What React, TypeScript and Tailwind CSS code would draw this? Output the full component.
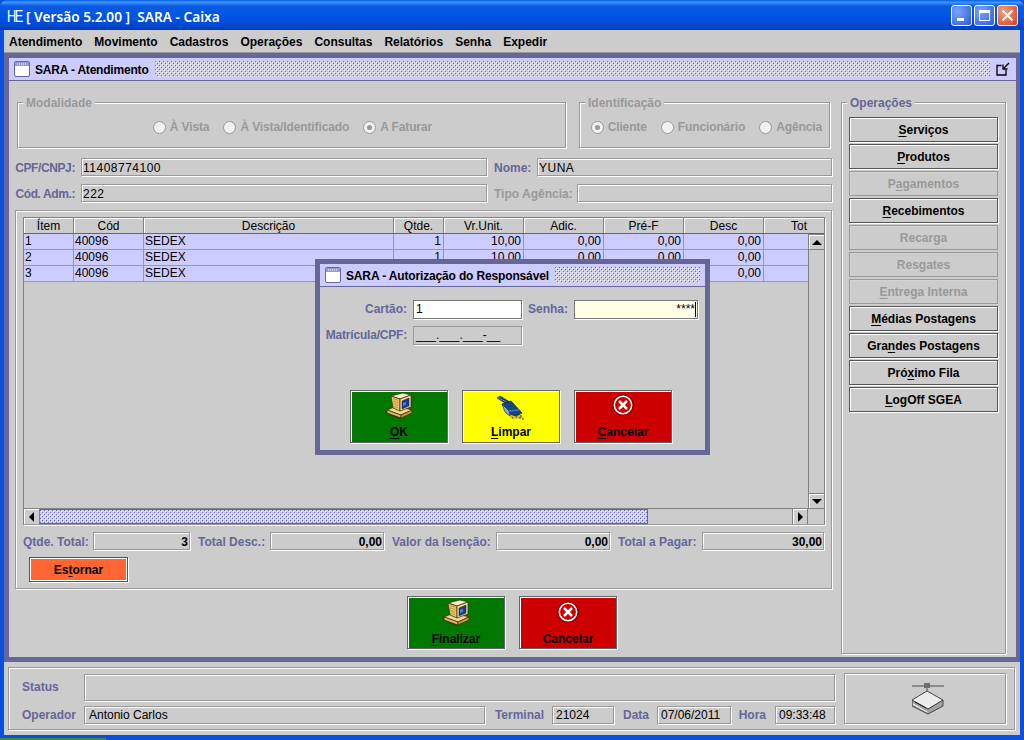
import React from "react";

const etched = "border border-[#999999] shadow-[inset_1px_1px_0_#ffffff,1px_1px_0_#ffffff]";
const dither =
  "bg-[conic-gradient(from_270deg_at_1px_1px,#666699_25%,transparent_0),conic-gradient(from_270deg_at_1px_1px,#666699_25%,transparent_0),conic-gradient(from_270deg_at_1px_1px,#ffffff_25%,transparent_0),conic-gradient(from_270deg_at_1px_1px,#ffffff_25%,transparent_0)] bg-[length:4px_4px] bg-[position:0_0,2px_2px,1px_1px,3px_3px]";

function FrameIcon() {
  return (
    <svg width="16" height="16" viewBox="0 0 16 16" className="shrink-0">
      <rect x="0.5" y="0.5" width="15" height="15" rx="1.5" fill="#ffffff" stroke="#666699" />
      <rect x="1" y="1" width="14" height="4" fill="#9999cc" />
      <path d="M3 3h1M5 3h1M7 3h1M9 3h1M11 3h1" stroke="#ffffff" />
    </svg>
  );
}

function Computer() {
  return (
    <svg width="28" height="27" viewBox="0 0 28 27" className="block">
      <path d="M0 21L14 27h3L2 19z" fill="#1f3a10" opacity="0.8" />
      <path d="M2 18l10-4 15 4-11 5z" fill="#f0d890" stroke="#3a2a0a" strokeWidth="0.7" />
      <path d="M2 18l14 5v3L2 21z" fill="#e0b860" stroke="#3a2a0a" strokeWidth="0.7" />
      <path d="M16 23l11-5v3l-11 5z" fill="#c89838" stroke="#3a2a0a" strokeWidth="0.7" />
      <path d="M6 4L18 1l8 2-11 4z" fill="#fff0c0" stroke="#3a2a0a" strokeWidth="0.7" />
      <path d="M6 4l9 3v12l-7-3z" fill="#e8c060" stroke="#3a2a0a" strokeWidth="0.7" />
      <path d="M15 7l11-4v12l-11 4z" fill="#f4dc9c" stroke="#3a2a0a" strokeWidth="0.7" />
      <path d="M17 9l7-3v8l-7 3z" fill="#1a3a9a" stroke="#3a2a0a" strokeWidth="0.5" />
      <path d="M18 11l3-1.300v3L18 14z" fill="#4a80d8" />
      <path d="M8 6.500l5 1.700M8 9l5 1.700M8 11.500l5 1.700M8 14l5 1.700" stroke="#b08c40" strokeWidth="0.7" />
    </svg>
  );
}

function Broom() {
  return (
    <svg width="30" height="24" viewBox="0 0 30 24" className="block">
      <path d="M7 14l9 9 12-1-8-6z" fill="#b8a030" opacity="0.7" />
      <path d="M1 2l3-2 10 6-2 3z" fill="#14407c" stroke="#0c2a50" strokeWidth="0.6" />
      <path d="M2 1.500l9 5" stroke="#6a9ad0" strokeWidth="0.8" />
      <path d="M6 8l9-3 11 12-6 3-9-3z" fill="#14477f" stroke="#0c2a50" strokeWidth="0.8" />
      <path d="M6 8l7 7 1 5-5-4z" fill="#8ab0d8" stroke="#0c2a50" strokeWidth="0.6" />
      <path d="M13 15l10-1" stroke="#3f78b8" strokeWidth="1.500" />
      <path d="M16 22h1M20 21h1M23 22h2M26 23h2M24 20h2" stroke="#404040" />
    </svg>
  );
}

function CancelIcon() {
  return (
    <svg width="22" height="22" viewBox="0 0 22 22" className="block">
      <circle cx="11" cy="11" r="11" fill="#8f0000" />
      <circle cx="11" cy="11" r="8.700" fill="#cc0000" stroke="#ffffff" strokeWidth="1.500" />
      <path d="M7 7l8 8M15 7l-8 8" stroke="#ffffff" strokeWidth="2.500" />
    </svg>
  );
}

function NetworkIcon() {
  return (
    <svg width="33" height="32" viewBox="0 0 33 32" className="block">
      <path d="M0 3h32" stroke="#8c8c8c" strokeWidth="2" />
      <rect x="12" y="0" width="6" height="5" fill="#6e6e6e" />
      <path d="M15 5v4" stroke="#555555" />
      <path d="M0 17l16 9 15-9v6l-15 8-16-8z" fill="#a4a4a4" stroke="#444444" />
      <path d="M15 8l16 9-15 9-16-9z" fill="#ececec" stroke="#444444" />
      <path d="M3 19l11 6" stroke="#222222" />
      <path d="M1 21l14 8" stroke="#ffffff" />
    </svg>
  );
}

function Radio({ label, on }: { label: string; on?: boolean }) {
  return (
    <span className="flex items-center gap-[4px]">
      <span className="w-[13px] h-[13px] rounded-full border border-[#999999] bg-[#f2f2f2] flex items-center justify-center">
        {on && <span className="w-[5px] h-[5px] rounded-full bg-[#999999]" />}
      </span>
      <span className="text-[#999999] tracking-[-0.12px]">{label}</span>
    </span>
  );
}

function Field({ children, className = "" }: { children?: React.ReactNode; className?: string }) {
  return (
    <div className={`${etched} h-[18px] flex items-center font-normal text-black ${className}`}>{children}</div>
  );
}

function Group({ title, className = "", disabled, children }: { title: string; className?: string; disabled?: boolean; children?: React.ReactNode }) {
  return (
    <div className={`relative ${etched} ${className}`}>
      <span className={`absolute left-[5px] top-[-8px] bg-[#cccccc] px-[3px] leading-[16px] ${disabled ? "text-[#999999]" : "text-[#666699]"}`}>{title}</span>
      {children}
    </div>
  );
}

function U({ children }: { children: React.ReactNode }) {
  return <span className="underline underline-offset-2">{children}</span>;
}

function SideBtn({ children, off }: { children: React.ReactNode; off?: boolean }) {
  return (
    <div className={`h-[25px] flex items-center justify-center ${off ? "border border-[#999999] text-[#999999] shadow-[inset_1px_1px_0_#d4d4d4]" : "border border-[#555555] shadow-[inset_1px_1px_0_#ffffff,1px_1px_0_#ffffff] text-black"}`}>
      {children}
    </div>
  );
}

function BigBtn({ color, icon, children, className = "" }: { color: string; icon: React.ReactNode; children: React.ReactNode; className?: string }) {
  return (
    <div className={`w-[98px] h-[53px] border border-[#666666] shadow-[inset_1px_1px_0_#ffffff,1px_1px_0_#ffffff] flex flex-col items-center text-black ${color} ${className}`}>
      <div className="h-[30px] flex items-start justify-center">{icon}</div>
      <div className="mt-[4px] leading-[14px]">{children}</div>
    </div>
  );
}

const cols = [
  ["Ítem", 50], ["Cód", 70], ["Descrição", 250], ["Qtde.", 50], ["Vr.Unit.", 80], ["Adic.", 80], ["Pré-F", 80], ["Desc", 80],
] as const;

const rows = ["1", "2", "3"];

function cellText(row: string, i: number) {
  if (row === "3" && i >= 3 && i <= 6) return "";
  if (i === 0) return row;
  if (i === 1) return "40096";
  if (i === 2) return "SEDEX";
  if (i === 3) return "1";
  if (i === 4) return "10,00";
  return "0,00";
}

function Table() {
  return (
    <div className="relative w-[802px] h-[308px] border border-[#808080] border-b-[#999999] ml-[7px] mt-[6px] shadow-[1px_1px_0_#ffffff] flex flex-col font-normal text-black">
      <div className="flex h-[16px] border-b border-[#666666] text-center leading-[16px]">
        {cols.map(([n, w]) => (
          <div key={n} style={{ width: w }} className="border-r border-[#808080] shadow-[inset_1px_1px_0_#ffffff]">{n}</div>
        ))}
        <div className="flex-1 overflow-hidden shadow-[inset_1px_1px_0_#ffffff] pl-[27px] text-left">Tot</div>
      </div>
      <div className="flex flex-1 min-h-0">
        <div className="flex-1 min-w-0">
          {rows.map((r) => (
            <div key={r} className="flex h-[16px] bg-[#ccccff] border-b border-[#999999] leading-[15px]">
              {cols.map(([n, w], i) => (
                <div key={n} style={{ width: w }} className={`border-r border-[#999999] px-[1px] ${i > 2 ? "text-right pr-[2px]" : ""}`}>
                  {cellText(r, i)}
                </div>
              ))}
            </div>
          ))}
        </div>
        <div className="w-[16px] h-[275px] border-l border-[#808080] flex flex-col justify-between">
          <ArrowBtn dir="up" />
          <ArrowBtn dir="down" />
        </div>
      </div>
      <div className="flex h-[16px] border-t border-[#808080]">
        <div className="w-[16px] border-r border-[#808080] shadow-[inset_1px_1px_0_#ffffff] flex items-center justify-center">
          <span className="w-0 h-0 border-y-[5px] border-y-transparent border-r-[5px] border-r-black" />
        </div>
        <div className={`w-[608px] border-y border-r border-[#666699] bg-[#ccccff] ${dither}`} />
        <div className="flex-1" />
        <div className="w-[16px] border-x border-[#808080] shadow-[inset_1px_1px_0_#ffffff] flex items-center justify-center">
          <span className="w-0 h-0 border-y-[5px] border-y-transparent border-l-[5px] border-l-black" />
        </div>
        <div className="w-[16px]" />
      </div>
    </div>
  );
}

function ArrowBtn({ dir }: { dir: "up" | "down" }) {
  return (
    <div className="h-[16px] border-y border-[#808080] shadow-[inset_1px_1px_0_#ffffff] flex items-center justify-center">
      <span className={`w-0 h-0 border-x-[5px] border-x-transparent ${dir === "up" ? "border-b-[5px] border-b-black" : "border-t-[5px] border-t-black"}`} />
    </div>
  );
}

function Total({ label, value, labelW, w }: { label: string; value: string; labelW: string; w: string }) {
  return (
    <div className="flex items-center">
      <span className={`text-[#666699] pt-[2px] whitespace-nowrap ${labelW}`}>{label}</span>
      <Field className={`${w} justify-end pr-[1px] pt-[2px]`}><b>{value}</b></Field>
    </div>
  );
}

function Dialog() {
  return (
    <div className="absolute left-[315px] top-[259px] w-[395px] h-[196px] border-[5px] border-[#666699] bg-[#cccccc] flex flex-col">
      <div className="h-[23px] bg-[#ccccff] border-b border-[#666699] flex items-center pl-[5px] pr-[5px] gap-[5px] text-black">
        <FrameIcon />
        <span className="whitespace-nowrap tracking-[-0.15px] pt-[1px]">SARA - Autorização do Responsável</span>
        <div className={`flex-1 h-[16px] ml-[1px] ${dither}`} />
      </div>
      <div className="flex items-center mt-[12px] h-[20px]">
        <span className="w-[87px] text-right text-[#666699]">Cartão:</span>
        <div className="ml-[6px] w-[109px] h-[19px] border border-[#777777] shadow-[1px_1px_0_#ffffff] bg-white px-[2px] font-normal text-black flex items-center">1</div>
        <span className="w-[46px] text-right text-[#666699]">Senha:</span>
        <div className="ml-[6px] w-[124px] h-[19px] border border-[#777777] shadow-[1px_1px_0_#ffffff] bg-[#ffffe6] font-normal text-black flex items-center justify-end pr-[1px]">
          ****<span className="w-px h-[15px] bg-black" />
        </div>
      </div>
      <div className="flex items-center mt-[6px] h-[20px]">
        <span className="w-[87px] text-right text-[#666699] whitespace-nowrap tracking-[-0.2px]">Matrícula/CPF:</span>
        <div className="ml-[6px] w-[109px] h-[19px] border border-[#999999] shadow-[1px_1px_0_#ffffff] px-[2px] font-normal text-black flex items-center">___.___.___-__</div>
      </div>
      <div className="flex gap-[14px] ml-[30px] mt-[45px]">
        <BigBtn color="bg-[#007700]" icon={<div className="mt-[1px]"><Computer /></div>}><U>O</U>K</BigBtn>
        <BigBtn color="bg-[#ffff00]" icon={<div className="mt-[5px]"><Broom /></div>}><U>L</U>impar</BigBtn>
        <BigBtn color="bg-[#cc0000]" icon={<div className="mt-[3px]"><CancelIcon /></div>}><U>C</U>ancelar</BigBtn>
      </div>
    </div>
  );
}

export default function App() {
  return (
    <div className="relative w-[1024px] h-[740px] overflow-hidden bg-[#0a4fe0] flex flex-col text-[12px] font-bold font-['Liberation_Sans',Arial,sans-serif] leading-[14px]">
      {/* title bar */}
      <div className="h-[30px] shrink-0 flex items-center pl-[7px] pr-[6px] rounded-t-[7px] text-white bg-[linear-gradient(180deg,#0a5fe8_0%,#3d95ff_8%,#0a5be0_20%,#0055e5_55%,#0048d0_85%,#003cb0_100%)]">
        <span className="w-[19px] pt-[3px] inline-block origin-left scale-x-[0.75] text-[17px] font-normal tracking-[-2px]">HE</span>
        <span className="pt-[4px] font-['Noto_Sans',sans-serif] text-[13.7px] font-semibold whitespace-pre">[ Versão 5.2.00 ]  SARA - Caixa</span>
        <div className="flex-1" />
        <div className="flex gap-[2px]">
          <div className="w-[21px] h-[21px] rounded-[3px] border border-white bg-[radial-gradient(circle_at_30%_30%,#7aa5f5,#2a5be0)] flex items-end pl-[5px] pb-[4px]"><span className="w-[7px] h-[3px] bg-white" /></div>
          <div className="w-[21px] h-[21px] rounded-[3px] border border-white bg-[radial-gradient(circle_at_30%_30%,#7aa5f5,#2a5be0)] flex items-center justify-center"><span className="w-[11px] h-[11px] border border-white border-t-[3px]" /></div>
          <div className="w-[21px] h-[21px] rounded-[3px] border border-white bg-[radial-gradient(circle_at_30%_30%,#f0a080,#d84020)] flex items-center justify-center">
            <svg width="13" height="13" viewBox="0 0 13 13"><path d="M1.500 1.500l10 10M11.500 1.500l-10 10" stroke="#ffffff" strokeWidth="2.200" /></svg>
          </div>
        </div>
      </div>

      {/* client area */}
      <div className="flex-1 min-h-0 mx-[4px] mb-[5px] bg-[#cccccc] flex flex-col">
        <div className="h-[23px] shrink-0 flex items-center gap-[12px] pl-[5px] pt-[1px] text-black border-b border-[#999999]">
          {["Atendimento", "Movimento", "Cadastros", "Operações", "Consultas", "Relatórios", "Senha", "Expedir"].map((m) => (
            <span key={m}>{m}</span>
          ))}
        </div>

        {/* internal frame */}
        <div className="h-[609px] shrink-0 border-[5px] border-r-[4px] border-[#666699] flex flex-col">
          <div className="h-[23px] shrink-0 bg-[#ccccff] border-b border-[#666699] rounded-t-[3px] flex items-center pl-[5px] pr-[6px] gap-[5px] text-black">
            <FrameIcon />
            <span className="whitespace-nowrap tracking-[-0.2px] pt-[1px]">SARA - Atendimento</span>
            <div className={`flex-1 h-[16px] ml-[1px] mr-[1px] ${dither}`} />
            <svg width="14" height="14" viewBox="0 0 14 14" className="shrink-0">
              <path d="M5.500 3.500H1V13h9V8" fill="none" stroke="#000000" strokeWidth="1.300" />
              <path d="M13 1L8 6M7 2.500V7h4.500" fill="none" stroke="#000000" strokeWidth="1.300" />
            </svg>
          </div>

          <div className="flex-1 min-h-0 flex pl-[6px] pt-[21px] text-[#666699]">
            {/* left column */}
            <div className="w-[818px] shrink-0 flex flex-col">
              <div className="flex pl-[2px] gap-[13px] h-[46px]">
                <Group title="Modalidade" disabled className="w-[549px]">
                  <div className="flex justify-end gap-[14px] pr-[133px] pt-[17px]">
                    <Radio label="À Vista" />
                    <Radio label="À Vista/Identificado" />
                    <Radio label="A Faturar" on />
                  </div>
                </Group>
                <Group title="Identificação" disabled className="w-[251px]">
                  <div className="flex justify-end gap-[14px] pr-[7px] pt-[17px]">
                    <Radio label="Cliente" on />
                    <Radio label="Funcionário" />
                    <Radio label="Agência" />
                  </div>
                </Group>
              </div>

              <div className="flex items-center mt-[10px] h-[18px]">
                <span className="w-[60px] pt-[2px] text-right whitespace-nowrap tracking-[-0.4px]">CPF/CNPJ:</span>
                <Field className="ml-[6px] w-[406px] pl-[1px] pt-[2px] tracking-[0.5px]">11408774100</Field>
                <span className="w-[50px] pt-[2px] pl-[7px] shrink-0">Nome:</span>
                <Field className="w-[295px] pl-[1px] pt-[2px] tracking-[0.5px]">YUNA</Field>
              </div>
              <div className="flex items-center mt-[8px] h-[18px]">
                <span className="w-[60px] pt-[2px] text-right whitespace-nowrap tracking-[-0.4px]">Cód. Adm.:</span>
                <Field className="ml-[6px] w-[406px] pl-[1px] pt-[2px] tracking-[0.5px]">222</Field>
                <span className="w-[90px] pt-[2px] pl-[7px] shrink-0 text-[#999999] whitespace-nowrap">Tipo Agência:</span>
                <Field className="w-[255px]" />
              </div>

              <div className={`relative mt-[8px] h-[379px] w-[817px] ${etched}`}>
                <Table />
                <div className="flex mt-[7px] ml-[7px] gap-[8px]">
                  <Total label="Qtde. Total:" labelW="w-[70px]" w="w-[97px]" value="3" />
                  <Total label="Total Desc.:" labelW="w-[72px]" w="w-[114px]" value="0,00" />
                  <Total label="Valor da Isenção:" labelW="w-[104px]" w="w-[114px]" value="0,00" />
                  <Total label="Total a Pagar:" labelW="w-[84px]" w="w-[122px]" value="30,00" />
                </div>
                <div className="ml-[13px] mt-[7px] w-[99px] h-[25px] border border-[#555555] shadow-[inset_0_0_0_1px_#ffffff,1px_1px_0_#ffffff] bg-[#ff6633] text-black flex items-center justify-center">
                  Es<U>t</U>ornar
                </div>
              </div>

              <div className="flex gap-[14px] mt-[7px] pl-[392px]">
                <BigBtn className="pt-[1px]" color="bg-[#007700]" icon={<div className="mt-[1px]"><Computer /></div>}><U>F</U>inalizar</BigBtn>
                <BigBtn className="pt-[1px]" color="bg-[#cc0000]" icon={<div className="mt-[3px]"><CancelIcon /></div>}><U>C</U>ancelar</BigBtn>
              </div>
            </div>

            {/* operations */}
            <Group title="Operações" className="ml-[8px] w-[165px] h-[552px]">
              <div className="flex flex-col gap-[2px] px-[7px] pt-[14px]">
                <SideBtn><span><U>S</U>erviços</span></SideBtn>
                <SideBtn><span><U>P</U>rodutos</span></SideBtn>
                <SideBtn off><span>P<U>a</U>gamentos</span></SideBtn>
                <SideBtn><span><U>R</U>ecebimentos</span></SideBtn>
                <SideBtn off><span>Recarga</span></SideBtn>
                <SideBtn off><span>Res<U>g</U>ates</span></SideBtn>
                <SideBtn off><span><U>E</U>ntrega Interna</span></SideBtn>
                <SideBtn><span><U>M</U>édias Postagens</span></SideBtn>
                <SideBtn><span>Gra<U>n</U>des Postagens</span></SideBtn>
                <SideBtn><span>Pró<U>x</U>imo Fila</span></SideBtn>
                <SideBtn><span><U>L</U>ogOff SGEA</span></SideBtn>
              </div>
            </Group>
          </div>
        </div>

        {/* status panel */}
        <div className={`ml-[4px] mr-[5px] mt-[5px] h-[63px] flex items-center pl-[13px] text-[#666699] ${etched}`}>
          <div className="w-[813px] flex flex-col gap-[5px]">
            <div className="flex items-center">
              <span className="w-[62px]">Status</span>
              <Field className="h-[27px] w-[751px]" />
            </div>
            <div className="flex items-center">
              <span className="w-[62px]">Operador</span>
              <Field className="w-[401px] pl-[4px]">Antonio Carlos</Field>
              <span className="w-[59px] text-right">Terminal</span>
              <Field className="ml-[8px] w-[62px] pl-[3px]">21024</Field>
              <span className="w-[35px] text-right">Data</span>
              <Field className="ml-[8px] w-[74px] pl-[3px]">07/06/2011</Field>
              <span className="w-[35px] text-right">Hora</span>
              <Field className="ml-[9px] w-[60px] pl-[3px]">09:33:48</Field>
            </div>
          </div>
          <div className={`ml-[9px] w-[162px] h-[51px] flex items-center justify-center pl-[6px] ${etched}`}>
            <NetworkIcon />
          </div>
        </div>
      </div>

      {/* taskbar sliver */}
      <div className="absolute left-0 bottom-0 w-[106px] h-[2px] bg-[#3c8a3c]" />

      <Dialog />
    </div>
  );
}
